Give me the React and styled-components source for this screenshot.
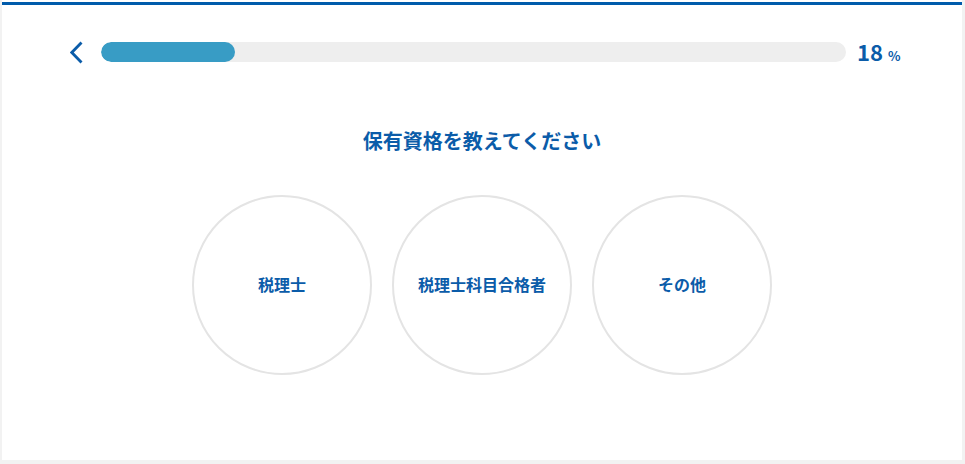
import React from 'react'
import styled, { createGlobalStyle } from 'styled-components'

const GlobalStyle = createGlobalStyle`
  html, body {
    margin: 0;
    padding: 0;
    background: #f2f2f2;
    font-family: "Noto Sans CJK JP", "Noto Sans", sans-serif;
  }
`

const options = ['税理士', '税理士科目合格者', 'その他']

const BackIcon = () => (
  <svg width="13" height="23" viewBox="0 0 13 23" fill="none">
    <polyline points="11.5,1.5 1.8,11.5 11.5,21.5" stroke="#0b5ca9" strokeWidth="2.8" strokeLinejoin="miter" />
  </svg>
)

export default function App() {
  const progress = 18
  return (
    <>
      <GlobalStyle />
      <Card>
        <TopBar />
        <ProgressRow>
          <BackButton aria-label="戻る">
            <BackIcon />
          </BackButton>
          <Track>
            <Fill style={{ width: `${progress}%` }} />
          </Track>
          <Percent>
            <Num>{progress}</Num>
            <Unit>%</Unit>
          </Percent>
        </ProgressRow>
        <Title>保有資格を教えてください</Title>
        <Choices>
          {options.map(label => (
            <Choice key={label}>{label}</Choice>
          ))}
        </Choices>
      </Card>
    </>
  )
}

const Card = styled.div`
  width: 960px;
  height: 460px;
  margin-left: 2px;
  background: #fff;
  display: flex;
  flex-direction: column;
  box-sizing: border-box;
  padding-top: 2px;
`

const TopBar = styled.div`
  height: 3px;
  background: #005bab;
`

const ProgressRow = styled.div`
  display: flex;
  align-items: center;
  height: 20px;
  margin-top: 37px;
  padding: 0 61px 0 68px;
`

const BackButton = styled.button`
  display: flex;
  align-items: center;
  justify-content: center;
  width: 13px;
  height: 23px;
  padding: 0;
  border: 0;
  background: none;
  cursor: pointer;
  margin-right: 18px;
`

const Track = styled.div`
  flex: 1;
  height: 20px;
  border-radius: 10px;
  background: #eeeeee;
  overflow: hidden;
`

const Fill = styled.div`
  height: 100%;
  border-radius: 10px;
  background: #389cc5;
`

const Percent = styled.div`
  width: 44px;
  margin-left: 11px;
  display: flex;
  align-items: baseline;
  color: #0b5ca9;
  font-weight: 700;
  white-space: nowrap;
`

const Num = styled.span`
  font-size: 22px;
  line-height: 1;
`

const Unit = styled.span`
  font-size: 13px;
  margin-left: 5px;
`

const Title = styled.h1`
  margin: 64px 0 0;
  font-size: 20px;
  line-height: 30px;
  font-weight: 700;
  text-align: center;
  color: #0b5ca9;
`

const Choices = styled.div`
  display: flex;
  justify-content: center;
  gap: 20px;
  margin-top: 39px;
`

const Choice = styled.button`
  width: 180px;
  height: 180px;
  border-radius: 50%;
  border: 2px solid #e4e4e4;
  background: #fff;
  box-sizing: border-box;
  display: flex;
  align-items: center;
  justify-content: center;
  font-family: inherit;
  font-size: 16px;
  font-weight: 700;
  color: #0b5ca9;
  cursor: pointer;
  padding: 0 0 3px;
`
